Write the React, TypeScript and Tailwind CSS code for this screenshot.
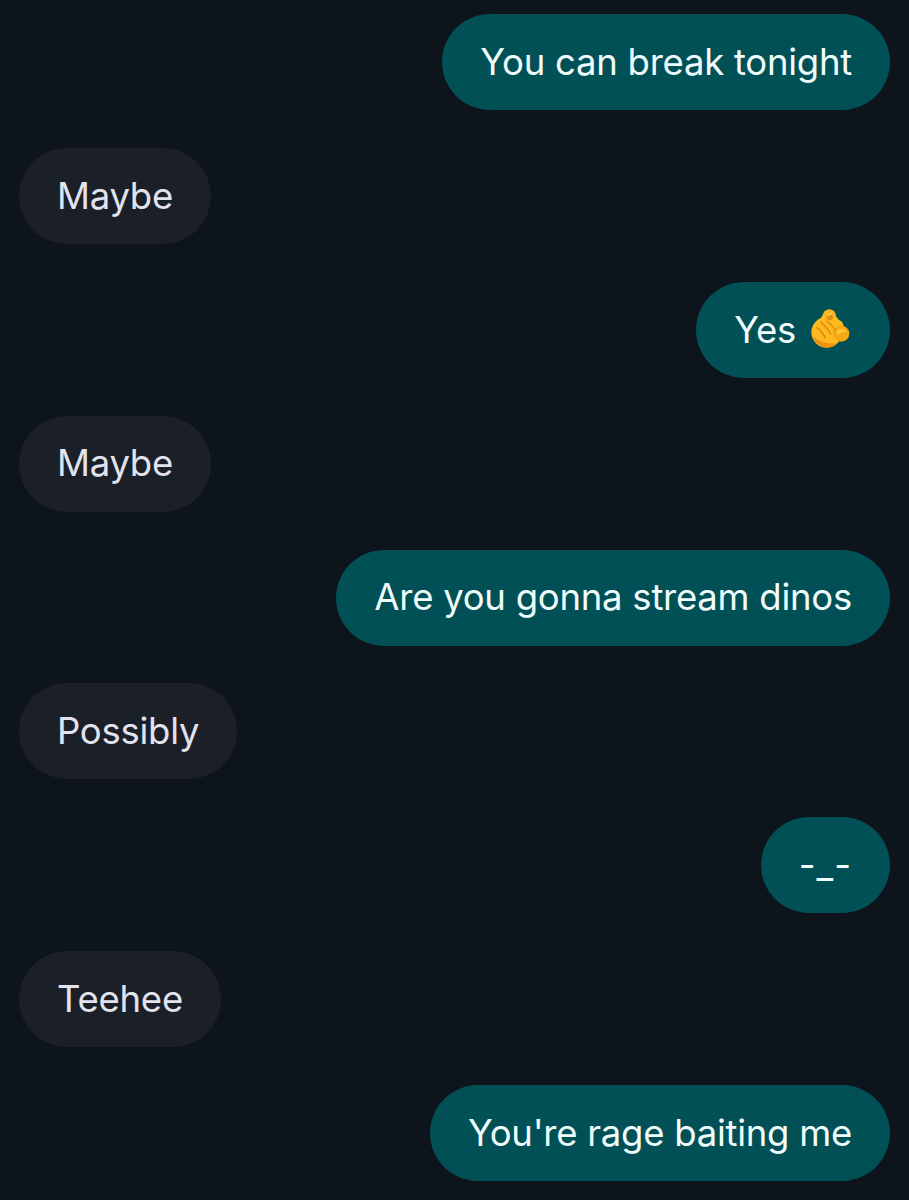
const PointingHand = () => {
  return (
    <svg viewBox="0 0 150 150" className="w-[50px] h-[50px] ml-[8px] -mr-[2px]">
      <path d="M40 56 L60 24 L96 34 L128 74 L100 112 L40 112 Z" fill="#fdb91f" />
      <circle cx="76" cy="33" r="20" fill="#fdb91f" />
      <circle cx="68" cy="82" r="46" fill="#fdb91f" />
      <circle cx="100" cy="62" r="18" fill="#fdb91f" />
      <circle cx="112" cy="86" r="24" fill="#f6a814" />
      <path d="M24 92 C30 112 50 128 72 127 C84 127 94 122 100 114 C72 120 44 110 24 92 Z" fill="#ec9210" />
      <circle cx="77" cy="36" r="10" fill="#df8d14" />
      <path d="M70 31 C74 25 82 25 85 31 C80 29 75 30 71 35 Z" fill="#ffd75a" />
      <path d="M50 52 C64 62 74 74 80 88 M38 68 C50 76 60 86 64 100 M68 48 C80 56 90 68 96 78" fill="none" stroke="#d9860f" strokeWidth="4" strokeLinecap="round" />
      <path d="M96 78 C104 68 124 70 130 82 C122 80 108 82 102 92 Z" fill="#ffc633" />
    </svg>
  );
};

const Bubble = ({ mine, children }: { mine?: boolean; children: React.ReactNode }) => {
  return (
    <div
      className={
        mine
          ? "self-end flex items-center h-[96px] rounded-[48px] px-[38px] bg-[#005056] text-[#f0fbfb]"
          : "self-start flex items-center h-[96px] rounded-[48px] px-[38px] bg-[#1b1f27] text-[#e1e3ee]"
      }
    >
      {children}
    </div>
  );
};

export default function App() {
  return (
    <div className="w-[909px] h-[1200px] overflow-hidden bg-[#0d141b] flex flex-col gap-[37.9px] pt-[14px] pl-[19px] pr-[19px] font-['Inter',sans-serif] text-[36.5px] font-[380] tracking-[-0.25px] leading-none whitespace-pre">
      <Bubble mine>You can break tonight</Bubble>
      <Bubble>Maybe</Bubble>
      <Bubble mine>
        Yes
        <PointingHand />
      </Bubble>
      <Bubble>Maybe</Bubble>
      <Bubble mine>Are you gonna stream dinos</Bubble>
      <Bubble>Possibly</Bubble>
      <Bubble mine>
        <span className="tracking-[1px]">-_-</span>
      </Bubble>
      <Bubble>Teehee</Bubble>
      <Bubble mine>You're rage baiting me</Bubble>
    </div>
  );
}
